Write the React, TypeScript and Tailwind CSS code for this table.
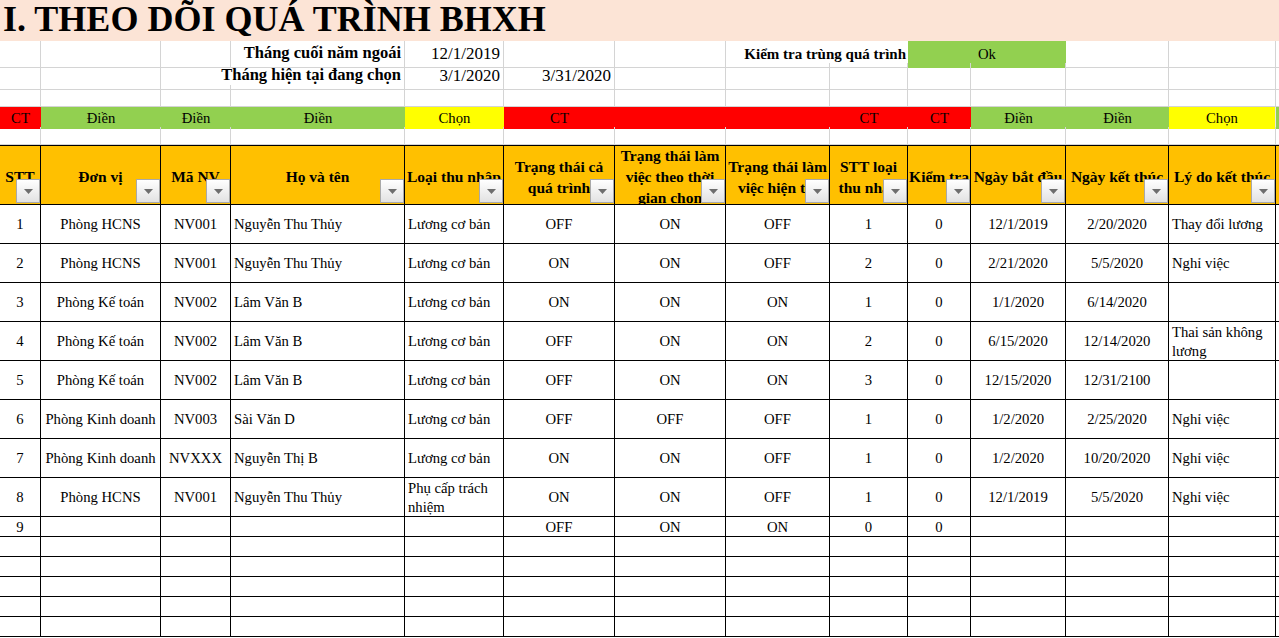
import React from "react";

const GRID =
  "grid grid-cols-[41px_120px_70px_174px_99px_111px_111px_104px_78px_63px_95px_103px_107px_200px]";

const headers: string[][] = [
  ["STT"],
  ["Đơn vị"],
  ["Mã NV"],
  ["Họ và tên"],
  ["Loại thu nhập"],
  ["Trạng thái cả", "quá trình"],
  ["Trạng thái làm", "việc theo thời", "gian chọn"],
  ["Trạng thái làm", "việc hiện tại"],
  ["STT loại", "thu nhập"],
  ["Kiểm tra"],
  ["Ngày bắt đầu"],
  ["Ngày kết thúc"],
  ["Lý do kết thúc"],
];

const rows: string[][] = [
  ["1", "Phòng HCNS", "NV001", "Nguyễn Thu Thủy", "Lương cơ bản", "OFF", "ON", "OFF", "1", "0", "12/1/2019", "2/20/2020", "Thay đổi lương"],
  ["2", "Phòng HCNS", "NV001", "Nguyễn Thu Thủy", "Lương cơ bản", "ON", "ON", "OFF", "2", "0", "2/21/2020", "5/5/2020", "Nghỉ việc"],
  ["3", "Phòng Kế toán", "NV002", "Lâm Văn B", "Lương cơ bản", "ON", "ON", "ON", "1", "0", "1/1/2020", "6/14/2020", ""],
  ["4", "Phòng Kế toán", "NV002", "Lâm Văn B", "Lương cơ bản", "OFF", "ON", "ON", "2", "0", "6/15/2020", "12/14/2020", "Thai sản không lương"],
  ["5", "Phòng Kế toán", "NV002", "Lâm Văn B", "Lương cơ bản", "OFF", "ON", "ON", "3", "0", "12/15/2020", "12/31/2100", ""],
  ["6", "Phòng Kinh doanh", "NV003", "Sài Văn D", "Lương cơ bản", "OFF", "OFF", "OFF", "1", "0", "1/2/2020", "2/25/2020", "Nghỉ việc"],
  ["7", "Phòng Kinh doanh", "NVXXX", "Nguyễn Thị B", "Lương cơ bản", "ON", "ON", "OFF", "1", "0", "1/2/2020", "10/20/2020", "Nghỉ việc"],
  ["8", "Phòng HCNS", "NV001", "Nguyễn Thu Thủy", "Phụ cấp trách nhiệm", "ON", "ON", "OFF", "1", "0", "12/1/2019", "5/5/2020", "Nghỉ việc"],
];

const lastRow = ["9", "", "", "", "", "OFF", "ON", "ON", "0", "0", "", "", ""];

// columns with text on the left, the rest are centered
const LEFT = [3, 4, 12];

const marks: [string, string][] = [
  ["bg-[#ff0000]", "CT"],
  ["bg-[#92d050]", "Điền"],
  ["bg-[#92d050]", "Điền"],
  ["bg-[#92d050]", "Điền"],
  ["bg-[#ffff00]", "Chọn"],
  ["bg-[#ff0000]", "CT"],
  ["bg-[#ff0000]", ""],
  ["bg-[#ff0000]", ""],
  ["bg-[#ff0000]", "CT"],
  ["bg-[#ff0000]", "CT"],
  ["bg-[#92d050]", "Điền"],
  ["bg-[#92d050]", "Điền"],
  ["bg-[#ffff00] border-r border-[#e6e6e6]", "Chọn"],
  ["bg-[#92d050]", ""],
];

function Cell({ className = "", children }: { className?: string; children?: React.ReactNode }) {
  return (
    <div className={`flex items-center whitespace-nowrap border-r border-b border-[#d4d4d4] ${className}`}>
      {children}
    </div>
  );
}

function Blank({ n }: { n: number }) {
  return (
    <>
      {Array.from({ length: n }).map((_, i) => (
        <Cell key={i} />
      ))}
    </>
  );
}

function FilterBtn() {
  return (
    <span className="absolute right-0 bottom-[1px] w-[24px] h-[24px] flex items-center justify-center border border-[#a9a9a9] bg-linear-to-b from-white to-[#e2e2e2]">
      <svg width="9" height="5" viewBox="0 0 9 5">
        <path d="M0 0H9L4.5 5Z" fill="#6e6e6e" />
      </svg>
    </span>
  );
}

function DataRow({ cells, tall }: { cells: string[]; tall: boolean }) {
  return (
    <div className={`${GRID} ${tall ? "h-[39px]" : "h-[20px]"}`}>
      {cells.map((v, i) => (
        <div
          key={i}
          className={`flex items-center overflow-hidden border-r border-b border-black text-[14.7px] leading-[19px] ${
            tall ? "pt-[1px]" : "pt-[2px]"
          } ${LEFT.includes(i) ? "justify-start pl-[3px] pr-[2px]" : "justify-center text-center whitespace-nowrap"}`}
        >
          {v}
        </div>
      ))}
      <div className="border-b border-black" />
    </div>
  );
}

export default function App() {
  return (
    <div className="w-[1279px] h-[638px] overflow-hidden bg-white text-black font-['Liberation_Serif',serif]">
      {/* tiêu đề */}
      <div className="h-[41px] w-full bg-[#fce4d6] pl-[3px]">
        <h1 className="text-[36px] leading-[38px] font-bold whitespace-nowrap">I. THEO DÕI QUÁ TRÌNH BHXH</h1>
      </div>

      <div className={`${GRID} h-[22px]`}>
        <Blank n={3} />
        <Cell className="justify-end pr-[3px] font-bold text-[16.5px]">Tháng cuối năm ngoái</Cell>
        <Cell className="justify-end pr-[3px] text-[17px]">12/1/2019</Cell>
        <Blank n={2} />
        <div className="col-span-2 flex items-center justify-end pr-[2px] whitespace-nowrap border-b border-[#d4d4d4] font-bold text-[15px]">
          Kiểm tra trùng quá trình
        </div>
        <div className="col-span-2 flex items-center justify-center bg-[#92d050] text-[14.7px]">Ok</div>
        <Blank n={3} />
      </div>

      <div className={`${GRID} h-[22px]`}>
        <Blank n={2} />
        <Cell className="col-span-2 justify-end pr-[3px] font-bold text-[16.5px]">Tháng hiện tại đang chọn</Cell>
        <Cell className="justify-end pr-[3px] text-[17px]">3/1/2020</Cell>
        <Cell className="justify-end pr-[3px] text-[17px]">3/31/2020</Cell>
        <Blank n={8} />
      </div>

      <div className={`${GRID} h-[22px]`}>
        <Blank n={14} />
      </div>

      {/* hàng ghi chú */}
      <div className={`${GRID} h-[20px]`}>
        {marks.map(([bg, t], i) => (
          <div key={i} className={`flex items-center justify-center text-[14.7px] whitespace-nowrap ${bg}`}>
            {t}
          </div>
        ))}
      </div>

      <div className={`${GRID} h-[18px]`}>
        <Blank n={14} />
      </div>

      {/* tiêu đề bảng */}
      <div className={`${GRID} h-[60px] border-t border-black`}>
        {headers.map((lines, i) => (
          <div
            key={i}
            className="relative flex flex-col items-center justify-center overflow-hidden pt-[3px] bg-[#ffc000] border-r border-b border-black font-bold text-[15.5px] leading-[21px] text-center"
          >
            {lines.map((l, j) => (
              <span key={j} className="whitespace-nowrap">
                {l}
              </span>
            ))}
            <FilterBtn />
          </div>
        ))}
        <div className="bg-[#ffc000] border-b border-black" />
      </div>

      {rows.map((r, i) => (
        <DataRow key={i} cells={r} tall />
      ))}
      <DataRow cells={lastRow} tall={false} />
      {Array.from({ length: 5 }).map((_, i) => (
        <DataRow key={i} cells={Array(13).fill("")} tall={false} />
      ))}
    </div>
  );
}
